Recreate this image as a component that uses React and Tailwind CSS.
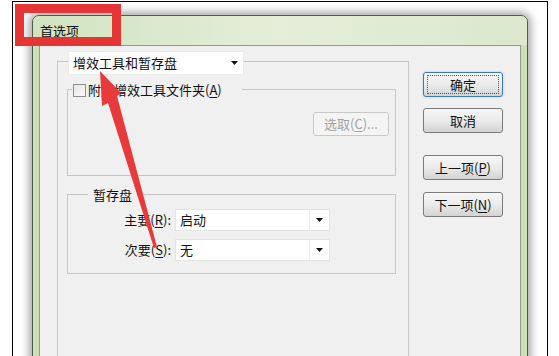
import React from "react";

const FONT = { fontFamily: '"Noto Sans CJK SC", "Noto Sans", sans-serif' };

const U = ({ children }) => <span className="underline underline-offset-2">{children}</span>;

const Arrow = () => (
  <svg width="7" height="4" viewBox="0 0 7 4" className="block">
    <path d="M0 0 H7 L3.5 4 Z" fill="#111" />
  </svg>
);

const WinButton = ({ children, focused, className = "" }) => (
  <div
    className={`flex h-[25px] w-[80px] items-center justify-center rounded-[3px] border bg-gradient-to-b from-[#f7f7f7] via-[#ebebeb] to-[#d3d3d3] text-[13px] text-[#111] ${
      focused ? "border-[#3d7bad] shadow-[0_0_2px_#8cc4ea]" : "border-[#7a7a7a]"
    } ${className}`}
  >
    {focused ? (
      <div className="flex h-[19px] w-[72px] items-center justify-center border border-dotted border-[#555]">
        {children}
      </div>
    ) : (
      children
    )}
  </div>
);

const Select = ({ value, width }) => (
  <div className={`flex h-[22px] ${width} items-center border border-[#e4e4e4] bg-white text-[13px] text-[#111]`}>
    <span className="flex-1 pl-[4px]">{value}</span>
    <div className="flex h-full w-[20px] items-center justify-center border-l border-[#ececec]">
      <Arrow />
    </div>
  </div>
);

export default function App() {
  return (
    <div className="relative h-[356px] w-[559px] overflow-hidden bg-white" style={FONT}>
      {/* screenshot frame */}
      <div className="ml-[12px] mt-[1px] h-[420px] w-[536px] border-l border-r border-t border-black bg-white pl-[19px] pt-[13px]">
        {/* window */}
        <div className="h-[400px] w-[496px] rounded-t-[7px] border border-[#4f5c4a] bg-[#cddfb8] shadow-[0_0_9px_3px_rgba(0,0,0,0.35)]">
          {/* title bar */}
          <div className="flex h-[29px] items-center rounded-t-[6px] bg-gradient-to-r from-[#d2e3bf] via-[#e4eed9] to-[#dbe8cd] pl-[7px] pt-[1px] text-[13px] text-[#111]">
            首选项
          </div>
          {/* client area */}
          <div className="mx-[6px] flex h-[380px] gap-[14px] border border-[#8e9e86] bg-[#f0f0f0] pl-[17px] pt-[15px]">
            {/* main panel */}
            <div className="flex h-[400px] w-[352px] flex-col border border-[#c6c6c6] pl-[9px]">
              <div className="-mt-[11px] ml-[1px] flex h-[24px] w-[176px] items-center border border-[#ebebeb] bg-white text-[13px] text-[#111]">
                <span className="flex-1 pl-[4px]">增效工具和暂存盘</span>
                <div className="pr-[5px]">
                  <Arrow />
                </div>
              </div>

              {/* plug-ins group */}
              <div className="mt-[14px] flex h-[87px] w-[329px] flex-col border border-[#c6c6c6]">
                <div className="-mt-[8px] ml-[4px] flex h-[16px] items-center gap-[2px] self-start bg-[#f0f0f0] pl-[1px] pr-[20px] text-[13px] text-[#111]">
                  <div className="h-[13px] w-[13px] border border-[#8f8f8f] bg-gradient-to-br from-[#e6e6e6] to-[#fafafa]" />
                  <span>
                    附加增效工具文件夹(<U>A</U>)
                  </span>
                </div>
                <div className="mr-[6px] mt-[14px] flex h-[24px] w-[76px] items-center justify-center self-end rounded-[3px] border border-[#c9c9c9] bg-[#f4f4f4] text-[13px] text-[#a3a3a3]">
                  选取(<U>C</U>)...
                </div>
              </div>

              {/* scratch disk group */}
              <div className="mt-[18px] flex h-[80px] w-[329px] flex-col border border-[#c6c6c6]">
                <div className="-mt-[8px] ml-[20px] flex h-[16px] items-center self-start bg-[#f0f0f0] px-[5px] text-[13px] text-[#111]">
                  暂存盘
                </div>
                <div className="mt-[6px] flex items-center">
                  <span className="w-[104px] pr-[1px] text-right text-[13px] text-[#111]">
                    主要(<U>R</U>):
                  </span>
                  <div className="ml-[3px]">
                    <Select value="启动" width="w-[155px]" />
                  </div>
                </div>
                <div className="mt-[8px] flex items-center">
                  <span className="w-[104px] pr-[1px] text-right text-[13px] text-[#111]">
                    次要(<U>S</U>):
                  </span>
                  <div className="ml-[3px]">
                    <Select value="无" width="w-[155px]" />
                  </div>
                </div>
              </div>
            </div>

            {/* buttons */}
            <div className="mt-[11px] flex flex-col">
              <WinButton focused>确定</WinButton>
              <WinButton className="mt-[11px]">取消</WinButton>
              <WinButton className="mt-[22px] h-[24px]">
                上一项(<U>P</U>)
              </WinButton>
              <WinButton className="mt-[12px] h-[24px]">
                下一项(<U>N</U>)
              </WinButton>
            </div>
          </div>
        </div>
      </div>

      {/* red annotation box */}
      <div className="absolute left-[15px] top-[4px] h-[42px] w-[106px] border-[9px] border-[#e53535]" />

      {/* red annotation arrow */}
      <svg className="pointer-events-none absolute inset-0" width="559" height="356" viewBox="0 0 559 356">
        <path d="M100 71 L121 93 L117 96 L157 247 L154 248 L108 103 L102 106 Z" fill="#e83a3a" />
      </svg>
    </div>
  );
}
